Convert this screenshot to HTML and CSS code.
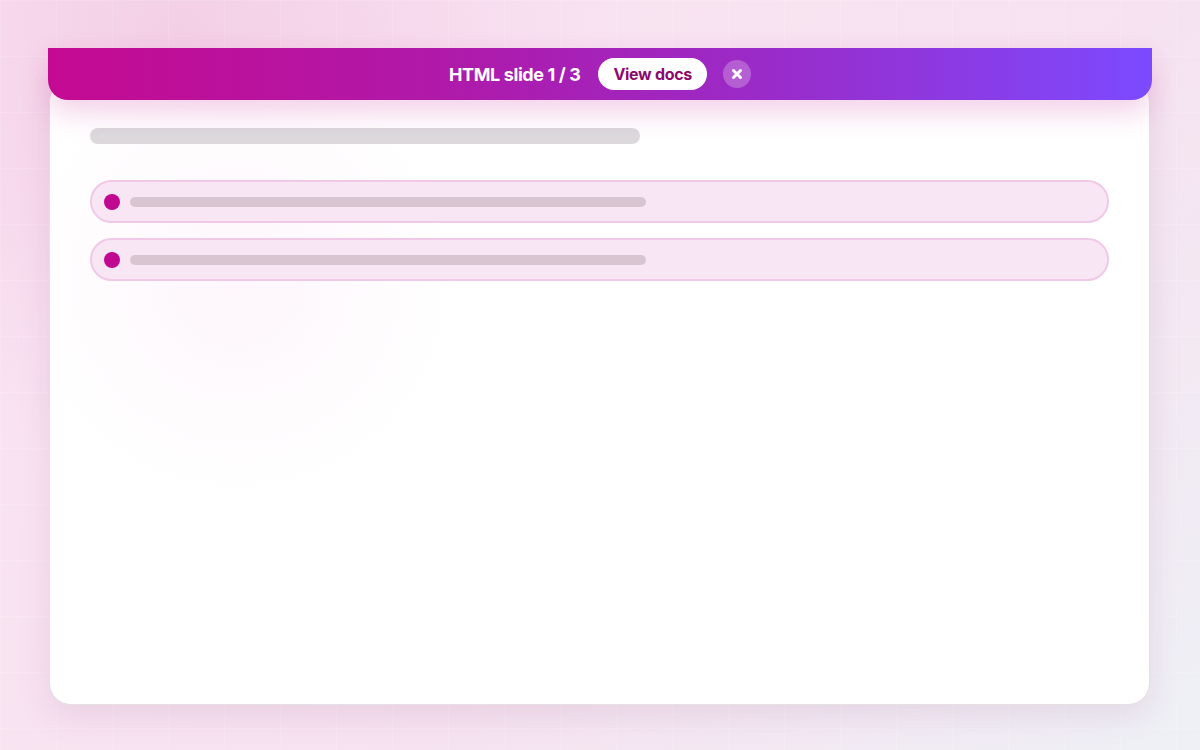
FILE: index.html
```html
<!DOCTYPE html>
<html lang="en">
<head>
    <meta charset="UTF-8">
    <meta name="viewport" content="width=device-width, initial-scale=1.0">
    <title>HTML slide 1 / 3</title>
    <link rel="stylesheet" href="styles.css">
</head>
<body>
    <div class="stage">
        <div class="slide-bar">
            <span class="slide-label">HTML slide 1 / 3</span>
            <button class="docs-button">View docs</button>
            <button class="close-button" aria-label="Close">
                <svg width="12" height="12" viewBox="0 0 12 12">
                    <path d="M2.5 2.5 L9.5 9.5 M9.5 2.5 L2.5 9.5" stroke="#fff" stroke-width="3" stroke-linecap="round"/>
                </svg>
            </button>
        </div>

        <div class="slide-card">
            <div class="skeleton-title"></div>
            <div class="item-list">
                <div class="item-row">
                    <span class="item-dot"></span>
                    <span class="item-line"></span>
                </div>
                <div class="item-row">
                    <span class="item-dot"></span>
                    <span class="item-line"></span>
                </div>
            </div>
        </div>
    </div>
</body>
</html>
```

FILE: styles.css
```css
    html, body {
        height: 100%;
    }

    body {
        font-family: 'Inter', 'Lato', sans-serif;
        margin: 0;
        padding: 48px;
        box-sizing: border-box;
        background-color: #f9e6f3;
        background-image:
            linear-gradient(rgba(255, 255, 255, 0.12) 1px, transparent 1px),
            linear-gradient(90deg, rgba(255, 255, 255, 0.12) 1px, transparent 1px),
            radial-gradient(circle at 15% 5%, #f3cfe6 0%, rgba(243, 207, 230, 0) 35%),
            linear-gradient(135deg, #fbe4f3 0%, #f6e2f0 60%, #eef0f6 100%);
        background-size: 56px 56px, 56px 56px, 100% 100%, 100% 100%;
        overflow: hidden;
    }

    .stage {
        width: 1104px;
        display: flex;
        flex-direction: column;
    }

    .slide-bar {
        position: relative;
        z-index: 2;
        height: 52px;
        display: flex;
        align-items: center;
        justify-content: center;
        background: linear-gradient(90deg, #c40a92 0%, #b019a8 35%, #9a2bc8 65%, #7c4aff 100%);
        border-radius: 0 0 20px 20px;
        box-shadow: 0 12px 28px rgba(200, 40, 150, 0.22);
    }

    .slide-label {
        color: #fff;
        font-size: 18px;
        font-weight: 700;
        letter-spacing: -0.4px;
        margin-right: 18px;
    }

    .docs-button {
        height: 32px;
        padding: 0 15px;
        border: none;
        border-radius: 16px;
        background-color: #fff;
        color: #8c0a6c;
        font-family: inherit;
        font-size: 16px;
        font-weight: 700;
        letter-spacing: -0.3px;
        margin-right: 16px;
        cursor: pointer;
    }

    .close-button {
        width: 28px;
        height: 28px;
        padding: 0;
        border: none;
        border-radius: 50%;
        background-color: rgba(255, 255, 255, 0.25);
        display: flex;
        align-items: center;
        justify-content: center;
        cursor: pointer;
    }

    .slide-card {
        position: relative;
        z-index: 1;
        margin: -20px 2px 0 1px;
        height: 625px;
        box-sizing: border-box;
        padding: 47px 40px 0;
        background:
            radial-gradient(circle at 17% 32%, rgba(250, 224, 242, 0.3) 0%, rgba(250, 224, 242, 0) 22%),
            #fff;
        border: 1px solid #e4e0e4;
        border-radius: 22px;
        box-shadow: 0 10px 30px rgba(170, 120, 160, 0.18);
    }

    .skeleton-title {
        width: 550px;
        height: 16px;
        border-radius: 8px;
        background-color: #dcd9dc;
    }

    .item-list {
        margin-top: 36px;
        display: flex;
        flex-direction: column;
        gap: 15px;
    }

    .item-row {
        height: 43px;
        box-sizing: border-box;
        display: flex;
        align-items: center;
        padding: 0 12px;
        background-color: #f9e6f4;
        border: 2px solid #f0c9e6;
        border-radius: 22px;
    }

    .item-dot {
        width: 16px;
        height: 16px;
        border-radius: 50%;
        background-color: #c00890;
        flex-shrink: 0;
    }

    .item-line {
        width: 516px;
        height: 10px;
        margin-left: 10px;
        border-radius: 5px;
        background-color: #d9c5d1;
    }
```
